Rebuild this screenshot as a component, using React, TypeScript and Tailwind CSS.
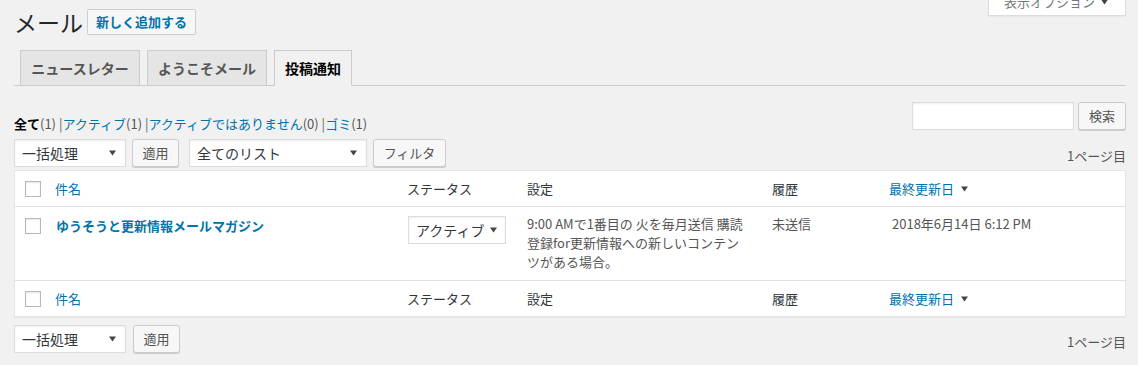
import React from "react";

const COLS = "grid grid-cols-[32px_352px_120px_245px_117px_1fr]";

function Arrow({ className = "" }: { className?: string }) {
  return (
    <svg width="7" height="6" viewBox="0 0 7 6" className={className} aria-hidden="true">
      <path d="M0 0.5h7L3.5 5.5z" fill="#444" />
    </svg>
  );
}

function Select({ label, width }: { label: string; width: string }) {
  return (
    <div
      className={`flex h-[28px] items-center justify-between border border-[#ddd] bg-white pl-[7px] pr-[9px] text-[14px] leading-[20px] text-[#32373c] shadow-[inset_0_1px_2px_rgba(0,0,0,0.07)] ${width}`}
    >
      <span>{label}</span>
      <Arrow />
    </div>
  );
}

function Button({ label, width }: { label: string; width: string }) {
  return (
    <div
      className={`flex h-[28px] items-center justify-center rounded-[3px] border border-[#ccc] bg-[#f7f7f7] text-[13px] text-[#555] shadow-[0_1px_0_#ccc] ${width}`}
    >
      {label}
    </div>
  );
}

function Check() {
  return (
    <span className="block h-[16px] w-[16px] border border-[#b4b9be] bg-white shadow-[inset_0_1px_2px_rgba(0,0,0,0.1)]" />
  );
}

function HeadRow({ last }: { last?: boolean }) {
  return (
    <div
      className={`${COLS} items-center text-[13px] leading-[20px] text-[#32373c] ${
        last ? "h-[35px]" : "h-[36px] border-b border-[#e1e1e1]"
      }`}
    >
      <div className="pl-[10px]">
        <Check />
      </div>
      <div className="pl-[8px] text-[#0073aa]">件名</div>
      <div className="pl-[8px]">ステータス</div>
      <div className="pl-[8px]">設定</div>
      <div className="pl-[8px]">履歴</div>
      <div className="flex items-center gap-[7px] pl-[8px] text-[#0073aa]">
        最終更新日
        <Arrow />
      </div>
    </div>
  );
}

export default function App() {
  return (
    <div className="min-h-screen bg-[#f1f1f1] pl-[14px] pr-[12px] font-['Noto_Sans_CJK_JP','Noto_Sans',sans-serif] text-[13px] text-[#444]">
      {/* Title + screen options */}
      <div className="flex items-start">
        <h1 className="mt-[8px] text-[23px] leading-[29px] font-normal text-[#23282d]">メール</h1>
        <div className="ml-[4px] mt-[9px] flex h-[26px] items-center rounded-[2px] border border-[#ccc] bg-[#f7f7f7] px-[8px] text-[13px] font-semibold text-[#0073aa]">
          新しく追加する
        </div>
        <div className="ml-auto -mt-[12px] flex h-[28px] w-[138px] items-center gap-[6px] border-x border-b border-[#ddd] bg-white pl-[15px] text-[13px] text-[#72777c] shadow-[0_1px_1px_rgba(0,0,0,0.04)]">
          表示オプション
          <Arrow />
        </div>
      </div>

      {/* Tabs */}
      <div className="mt-[13px] flex items-end border-b border-[#ccc]">
        <div className="-mb-px ml-[6px] flex h-[36px] w-[120px] items-center justify-center border border-[#ccc] bg-[#e5e5e5] text-[14px] font-semibold text-[#555]">
          ニュースレター
        </div>
        <div className="-mb-px ml-[7px] flex h-[36px] w-[120px] items-center justify-center border border-[#ccc] bg-[#e5e5e5] text-[14px] font-semibold text-[#555]">
          ようこそメール
        </div>
        <div className="-mb-px ml-[7px] flex h-[36px] w-[78px] items-center justify-center border border-[#ccc] border-b-[#f1f1f1] bg-[#f1f1f1] text-[14px] font-semibold text-black">
          投稿通知
        </div>
      </div>

      {/* Filters + search */}
      <div className="mt-[16px] flex h-[28px] items-start justify-between">
        <div className="mt-[12px] text-[13px] leading-[20px] text-[#666]">
          <span className="font-bold text-black">全て</span>
          <span className="text-[#555]">(1)</span> |
          <span className="text-[#0073aa]">アクティブ</span>
          <span className="text-[#555]">(1)</span> |
          <span className="text-[#0073aa]">アクティブではありません</span>
          <span className="text-[#555]">(0)</span> |
          <span className="text-[#0073aa]">ゴミ</span>
          <span className="text-[#555]">(1)</span>
        </div>
        <div className="flex items-center gap-[4px]">
          <div className="h-[28px] w-[162px] border border-[#ddd] bg-white shadow-[inset_0_1px_2px_rgba(0,0,0,0.07)]" />
          <Button label="検索" width="w-[48px]" />
        </div>
      </div>

      <div className="mt-[9px] flex items-end justify-between">
        <div className="flex items-center">
          <Select label="一括処理" width="w-[112px]" />
          <div className="ml-[6px]">
            <Button label="適用" width="w-[47px]" />
          </div>
          <div className="ml-[10px]">
            <Select label="全てのリスト" width="w-[178px]" />
          </div>
          <div className="ml-[6px]">
            <Button label="フィルタ" width="w-[73px]" />
          </div>
        </div>
        <div className="mb-[1px] text-[13px] leading-[20px] text-[#555]">1ページ目</div>
      </div>

      {/* Table */}
      <div className="mt-[3px] border border-[#e5e5e5] bg-white shadow-[0_1px_1px_rgba(0,0,0,0.04)]">
        <HeadRow />
        <div className={`${COLS} h-[74px] items-start border-b border-[#e1e1e1] text-[13px] text-[#555]`}>
          <div className="pl-[10px] pt-[11px]">
            <Check />
          </div>
          <div className="pl-[9px] pt-[9px] text-[13px] leading-[20px] font-bold text-[#0073aa]">
            ゆうそうと更新情報メールマガジン
          </div>
          <div className="pl-[9px] pt-[9px]">
            <div className="flex h-[28px] w-[98px] items-center justify-between border border-[#ddd] bg-white pl-[7px] pr-[8px] text-[14px] text-[#32373c] shadow-[inset_0_1px_2px_rgba(0,0,0,0.07)]">
              <span>アクティブ</span>
              <Arrow />
            </div>
          </div>
          <div className="whitespace-nowrap pl-[8px] pt-[7px] leading-[19px]">
            9:00 AMで1番目の 火を毎月送信 購読
            <br />
            登録for更新情報への新しいコンテン
            <br />
            ツがある場合。
          </div>
          <div className="pl-[8px] pt-[7px] leading-[20px]">未送信</div>
          <div className="pl-[11px] pt-[7px] leading-[20px]">2018年6月14日 6:12 PM</div>
        </div>
        <HeadRow last />
      </div>

      {/* Bottom nav */}
      <div className="mt-[8px] flex items-end justify-between">
        <div className="flex items-center">
          <Select label="一括処理" width="w-[112px]" />
          <div className="ml-[7px]">
            <Button label="適用" width="w-[47px]" />
          </div>
        </div>
        <div className="mb-[1px] text-[13px] leading-[20px] text-[#555]">1ページ目</div>
      </div>
    </div>
  );
}
